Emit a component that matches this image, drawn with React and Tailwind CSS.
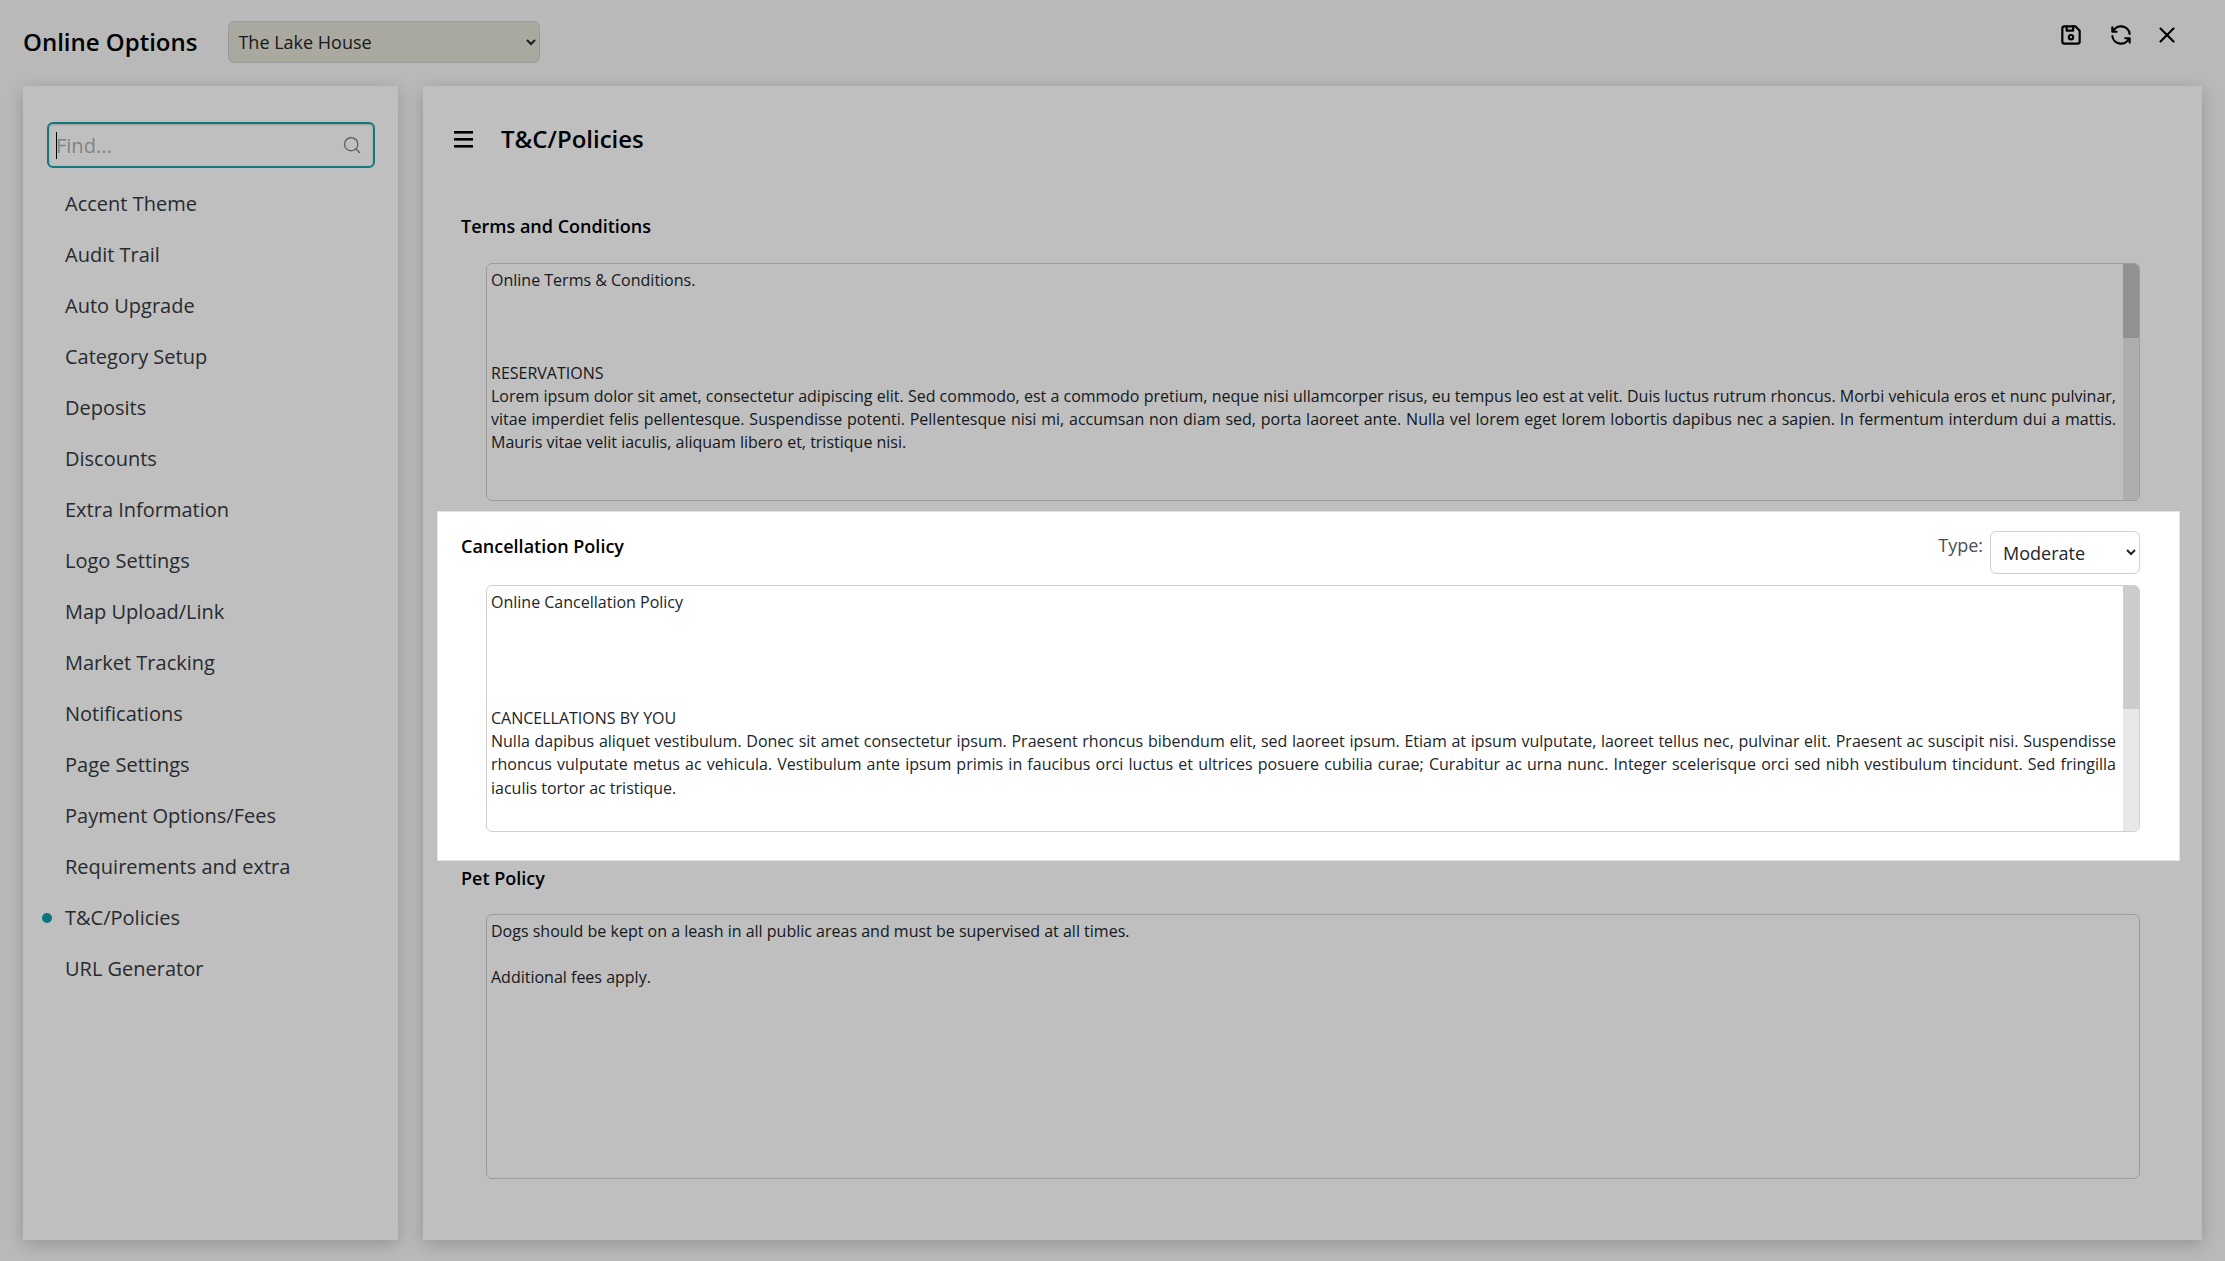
import React from 'react';
import { Search } from 'lucide-react';
import { TbDeviceFloppy, TbRefresh, TbX } from 'react-icons/tb';

const menuItems = [
  'Accent Theme',
  'Audit Trail',
  'Auto Upgrade',
  'Category Setup',
  'Deposits',
  'Discounts',
  'Extra Information',
  'Logo Settings',
  'Map Upload/Link',
  'Market Tracking',
  'Notifications',
  'Page Settings',
  'Payment Options/Fees',
  'Requirements and extra',
  'T&C/Policies',
  'URL Generator',
];

// Box that looks like a rich text field, with an optional scrollbar column
const TextBox = ({ height, thumb, thumbClass, children }) => (
  <div className={`ml-[25px] flex overflow-hidden rounded-md border border-[#d0d0d0] bg-white ${height}`}>
    <div className="flex-1 overflow-hidden pt-[5px] pl-[4px] pr-[7px] text-justify text-base leading-[23.2px] text-[#212529]">
      {children}
    </div>
    {thumb && (
      <div className="w-4 shrink-0 bg-[#e8e8e8]">
        <div className={`w-full ${thumb} ${thumbClass}`} />
      </div>
    )}
  </div>
);

const App = () => {
  return (
    <div className="relative h-[1261px] w-full overflow-hidden bg-[#f7f7f7] font-['Open_Sans',sans-serif] text-[#212529]">
      {/* Header */}
      <div className="flex h-[86px] items-start pl-[23px] pr-[45px]">
        <h1 className="mt-[21px] h-[42px] text-2xl font-semibold leading-[42px] text-black">Online Options</h1>
        <select className="ml-[31px] mt-[21px] h-[42px] w-[312px] rounded-md border border-[#cfcfcf] bg-[#e3e2d6] pl-[5px] text-lg text-[#212529]">
          <option>The Lake House</option>
        </select>
        <div className="ml-auto mt-[22px] flex items-center text-black">
          <TbDeviceFloppy className="h-[26px] w-[26px]" />
          <TbRefresh className="ml-[24px] h-[26px] w-[26px]" />
          <TbX className="ml-[20px] h-[26px] w-[26px]" />
        </div>
      </div>

      <div className="flex gap-[25px] pl-[23px]">
        {/* Side menu */}
        <aside className="h-[1154px] w-[375px] shrink-0 bg-white pl-[24px] pr-[23px] pt-[36px] shadow-[0_4px_16px_rgba(0,0,0,0.2)]">
          <div className="relative h-[46px] w-[328px] rounded-md border-2 border-[#17a2a8] shadow-[inset_0_1px_2px_rgba(0,0,0,0.2)]">
            <input
              placeholder="Find..."
              className="h-full w-full caret-transparent bg-transparent pl-[7px] text-xl text-[#212529] outline-none placeholder:text-[#adb0b3]"
            />
            <span className="absolute left-[7px] top-[8px] h-[27px] w-px bg-black" />
            <Search className="absolute right-[11px] top-[11px] h-5 w-5 text-[#777]" strokeWidth={1.5} />
          </div>
          <ul className="mt-[10px]">
            {menuItems.map((item) => (
              <li key={item} className="flex h-[51.07px] items-center text-xl text-[#343a40]">
                <span className="flex w-[18px] -ml-[5px] mr-[5px] justify-start">
                  {item === 'T&C/Policies' && <span className="h-[10px] w-[10px] rounded-full bg-[#0d9ea8]" />}
                </span>
                {item}
              </li>
            ))}
          </ul>
        </aside>

        {/* Content */}
        <main className="h-[1154px] w-[1779px] shrink-0 bg-white shadow-[0_4px_16px_rgba(0,0,0,0.2)]">
          <div className="flex h-[106px] items-center pl-[31px] pt-[-1px]">
            <svg width="19" height="17" viewBox="0 0 19 17" className="text-black">
              <rect y="0" width="19" height="2.6" fill="currentColor" />
              <rect y="7" width="19" height="2.6" fill="currentColor" />
              <rect y="14" width="19" height="2.6" fill="currentColor" />
            </svg>
            <h2 className="ml-[28px] text-2xl font-semibold text-black">T&amp;C/Policies</h2>
          </div>

          {/* Terms */}
          <section className="pl-[38px] pr-[62px] pt-[21px] pb-[10px]">
            <h3 className="mb-[24px] h-[26px] text-lg font-semibold leading-[26px] text-black">Terms and Conditions</h3>
            <TextBox height="h-[238px]" thumb="h-[74px]" thumbClass="bg-[#c2c2c2]">
              <p>Online Terms &amp; Conditions.</p>
              <p className="mt-[69.6px]">RESERVATIONS</p>
              <p>
                Lorem ipsum dolor sit amet, consectetur adipiscing elit. Sed commodo, est a commodo pretium, neque nisi ullamcorper risus, eu tempus leo est at velit. Duis luctus rutrum rhoncus. Morbi vehicula eros et nunc pulvinar, vitae imperdiet felis pellentesque. Suspendisse potenti. Pellentesque nisi mi, accumsan non diam sed, porta laoreet ante. Nulla vel lorem eget lorem lobortis dapibus nec a sapien. In fermentum interdum dui a mattis. Mauris vitae velit iaculis, aliquam libero et, tristique nisi.
              </p>
            </TextBox>
          </section>

          {/* Cancellation: highlighted above the dim layer */}
          <section className="relative z-20 ml-[14px] mr-[22px] h-[350px] border border-[#e4e4e4] bg-white pl-[23px] pr-[39px] pt-[19px]">
            <div className="flex h-[43px] items-start">
              <h3 className="mt-[2px] text-lg font-semibold leading-[26px] text-black">Cancellation Policy</h3>
              <span className="ml-auto mt-[1px] text-lg leading-[26px] text-[#495057]">Type:</span>
              <select className="ml-[7px] h-[43px] w-[150px] rounded-md border border-[#d0d0d0] bg-white pl-[8px] text-lg text-[#212529]">
                <option>Moderate</option>
              </select>
            </div>
            <div className="mt-[11px]">
              <TextBox height="h-[247px]" thumb="h-[123px]" thumbClass="bg-[#cccccc]">
                <p>Online Cancellation Policy</p>
                <p className="mt-[92.8px]">CANCELLATIONS BY YOU</p>
                <p>
                  Nulla dapibus aliquet vestibulum. Donec sit amet consectetur ipsum. Praesent rhoncus bibendum elit, sed laoreet ipsum. Etiam at ipsum vulputate, laoreet tellus nec, pulvinar elit. Praesent ac suscipit nisi. Suspendisse rhoncus vulputate metus ac vehicula. Vestibulum ante ipsum primis in faucibus orci luctus et ultrices posuere cubilia curae; Curabitur ac urna nunc. Integer scelerisque orci sed nibh vestibulum tincidunt. Sed fringilla iaculis tortor ac tristique.
                </p>
              </TextBox>
            </div>
          </section>

          {/* Pet policy */}
          <section className="pl-[38px] pr-[62px] pt-[4px]">
            <h3 className="mb-[23px] h-[26px] text-lg font-semibold leading-[26px] text-black">Pet Policy</h3>
            <TextBox height="h-[265px]">
              <p>Dogs should be kept on a leash in all public areas and must be supervised at all times.</p>
              <p className="mt-[23.2px]">Additional fees apply.</p>
            </TextBox>
          </section>
        </main>
      </div>

      {/* Dim layer of the guided tour */}
      <div className="absolute inset-0 z-10 bg-black/25" />
    </div>
  );
};

export default App;
